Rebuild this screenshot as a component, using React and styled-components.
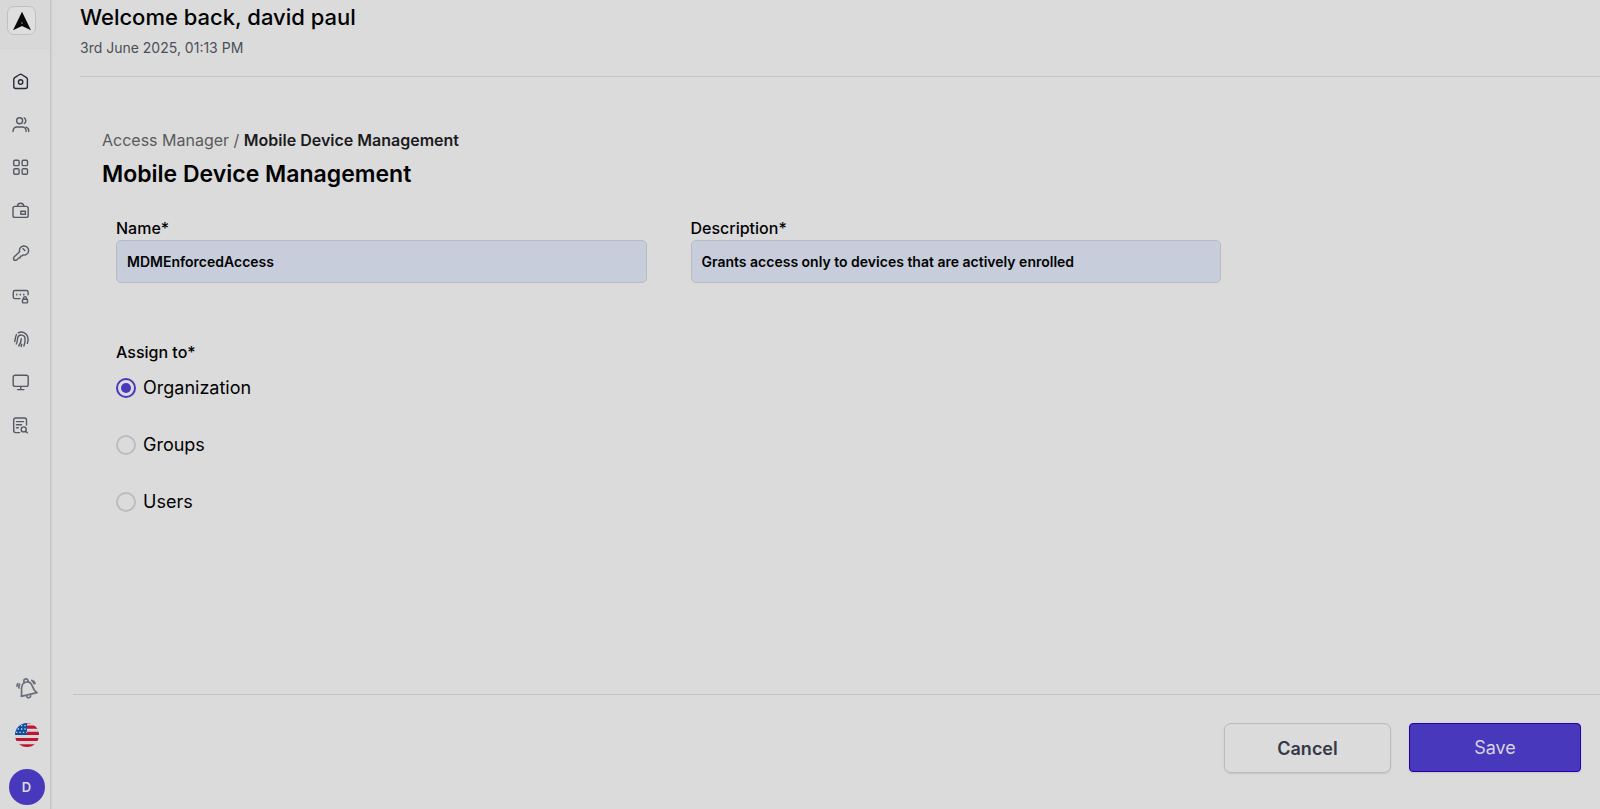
import React, { useState } from 'react';
import styled, { createGlobalStyle } from 'styled-components';

const GlobalStyle = createGlobalStyle`
  * {
    box-sizing: border-box;
  }

  body {
    margin: 0;
    background: #dbdbdb;
    color: #020203;
    font-family: Inter, 'Liberation Sans', sans-serif;
  }

  button,
  input {
    font-family: inherit;
  }
`;

const Page = styled.div`
  display: flex;
  min-height: 100vh;
`;

const Sidebar = styled.aside`
  flex: 0 0 51px;
  display: flex;
  flex-direction: column;
  border-right: 1px solid #c3c3c5;
  box-shadow: 1px 0 2px rgba(0, 0, 0, 0.06);
`;

const LogoArea = styled.div`
  height: 49px;
  padding: 6px 7px;
  background: #d8d8d8;
  border-bottom: 1px solid #d5d5d5;
`;

const LogoLink = styled.a`
  display: flex;
  align-items: center;
  justify-content: center;
  width: 29px;
  height: 29px;
  border: 1px solid #c0c0c0;
  border-radius: 7px;
  background: #dedede;
`;

const SideNav = styled.nav`
  display: flex;
  flex-direction: column;
  gap: 23px;
  padding: 22px 11px;
`;

const SideLink = styled.a`
  display: block;
  height: 20px;
  color: ${(props) => (props.$active ? '#262a3a' : '#555964')};

  svg {
    display: block;
  }
`;

const SideFooter = styled.div`
  margin-top: auto;
  display: flex;
  flex-direction: column;
  align-items: center;
  gap: 22px;
  padding: 0 4px 4px 7px;
`;

const SideButton = styled.button`
  display: flex;
  align-items: center;
  justify-content: center;
  width: 24px;
  height: 24px;
  padding: 0;
  border: none;
  border-radius: 50%;
  background: none;
  color: #6b6f7a;
  cursor: pointer;
`;

const Avatar = styled.button`
  width: 36px;
  height: 36px;
  padding: 0;
  border: none;
  border-radius: 50%;
  background: #4838bb;
  color: #dbdbdb;
  font-size: 13px;
  font-weight: 600;
  cursor: pointer;
`;

const Main = styled.main`
  flex: 1;
  min-width: 0;
  display: flex;
  flex-direction: column;
`;

const Header = styled.header`
  margin-left: 29px;
  padding: 3px 0 18px;
  border-bottom: 1px solid #c6c6c6;
`;

const Welcome = styled.h2`
  margin: 0;
  font-size: 22px;
  line-height: 28px;
  font-weight: 500;
`;

const DateText = styled.p`
  margin: 7px 0 0;
  font-size: 14px;
  line-height: 20px;
  color: #4c4f58;
`;

const Content = styled.form`
  flex: 1;
  display: flex;
  flex-direction: column;
`;

const Body = styled.div`
  padding: 51px 6px 24px 51px;
`;

const Breadcrumb = styled.nav`
  font-size: 16px;
  line-height: 24px;
  color: #5a5a5a;

  a {
    color: inherit;
    text-decoration: none;
  }

  span {
    color: #1b1b1e;
    font-weight: 600;
  }
`;

const Title = styled.h1`
  margin: 4px 0 0;
  font-size: 23px;
  line-height: 36px;
  font-weight: 600;
`;

const Fields = styled.div`
  display: grid;
  grid-template-columns: 1fr 1fr;
  gap: 44px;
  width: 75%;
  margin-top: 24px;
  padding-left: 14px;
`;

const Field = styled.div`
  display: flex;
  flex-direction: column;
`;

const Label = styled.label`
  font-size: 16px;
  line-height: 24px;
  font-weight: 500;
`;

const TextInput = styled.input`
  width: 100%;
  height: 43px;
  padding: 0 10px;
  border: 1px solid #b9bbc0;
  border-radius: 5px;
  background: #c7cdda;
  color: #020203;
  font-size: 14px;
  font-weight: 600;
`;

const Assign = styled.fieldset`
  margin: 57px 0 0;
  padding: 0 0 0 14px;
  border: none;

  legend {
    padding: 0;
    font-size: 16px;
    line-height: 24px;
    font-weight: 500;
  }
`;

const RadioList = styled.div`
  display: flex;
  flex-direction: column;
  align-items: flex-start;
  gap: 33px;
  padding-top: 12px;
`;

const RadioLabel = styled.label`
  display: flex;
  align-items: center;
  gap: 7px;
  font-size: 18px;
  line-height: 24px;
  cursor: pointer;
`;

const Radio = styled.input`
  appearance: none;
  display: grid;
  place-content: center;
  width: 20px;
  height: 20px;
  margin: 0;
  border: 2px solid #bcbcbc;
  border-radius: 50%;

  &:checked {
    border-color: #4838bb;
  }

  &:checked::before {
    content: '';
    width: 10px;
    height: 10px;
    border-radius: 50%;
    background: #4838bb;
  }
`;

const Actions = styled.footer`
  display: flex;
  justify-content: flex-end;
  gap: 18px;
  margin: auto 0 0 22px;
  padding: 28px 19px 36px 0;
  border-top: 1px solid #c2c2c4;
`;

const Button = styled.button`
  width: ${(props) => (props.$primary ? '172px' : '167px')};
  height: ${(props) => (props.$primary ? '49px' : '50px')};
  border: 1px solid ${(props) => (props.$primary ? '#2600b0' : '#b9bac2')};
  border-radius: ${(props) => (props.$primary ? '4px' : '7px')};
  background: ${(props) => (props.$primary ? '#4838bb' : '#dbdbdb')};
  box-shadow: 0 1px 2px rgba(16, 24, 40, 0.1);
  color: ${(props) => (props.$primary ? '#d6d4e0' : '#343848')};
  font-size: 18px;
  font-weight: ${(props) => (props.$primary ? 400 : 600)};
  cursor: pointer;
`;

const iconPaths = {
  Home: (
    <>
      <path d="M2.8 8.2c0-.7.3-1.2.9-1.6l4.9-3.1a1.9 1.9 0 0 1 2 0l4.9 3.1c.6.4.9.9.9 1.6v7.3a2 2 0 0 1-2 2H4.8a2 2 0 0 1-2-2z" />
      <circle cx="9.6" cy="11" r="2.2" />
    </>
  ),
  Users: (
    <>
      <circle cx="8.6" cy="6.7" r="3" />
      <path d="M2.1 17.6v-.8a3.8 3.8 0 0 1 3.8-3.8h5.4a3.8 3.8 0 0 1 3.8 3.8v.8" />
      <path d="M13.2 3.9a3.2 3.2 0 0 1 0 5.6M15 13.1a3.8 3.8 0 0 1 2.7 3.6v.9" />
    </>
  ),
  Applications: (
    <>
      <rect x="2.7" y="3.2" width="5.4" height="5.4" rx="1.2" />
      <rect x="11.1" y="3.2" width="5.4" height="5.4" rx="1.2" />
      <rect x="2.7" y="11.8" width="5.4" height="5.4" rx="1.2" />
      <rect x="11.1" y="11.8" width="5.4" height="5.4" rx="1.2" />
    </>
  ),
  Workspace: (
    <>
      <rect x="2" y="6.4" width="15.2" height="11" rx="2" />
      <path d="M6.4 6.4a3.2 3.2 0 0 1 6.4 0" />
      <rect x="9.8" y="11.2" width="4.6" height="3" />
    </>
  ),
  Keys: (
    <>
      <path d="M8.6 8.8a4.6 4.6 0 1 1 3.3 3.2l-.9.9-1.6.3-.3 1.6-1.6.3-1.5 1.7c-.3.3-.6.4-1 .4H3.5a.9.9 0 0 1-.9-.9v-1.2c0-.4.2-.7.4-1z" />
      <path d="m12 5.7 1.9 1.9" />
    </>
  ),
  Passwords: (
    <>
      <path d="M9 12.6H4A1.700 1.700 0 0 1 2.300 10.900V6.200c0-.9.8-1.700 1.700-1.700h11.400c.9 0 1.700.8 1.700 1.700v2.600" />
      <path d="M5.800 8.300v.6M9.300 8.300v.6M12.800 8.300v.6" />
      <rect x="11.500" y="13.300" width="5" height="3.600" rx="0.600" />
      <path d="M12.600 13.200V12a1.400 1.400 0 0 1 2.800 0v1.200" />
    </>
  ),
  Authentication: (
    <>
      <path d="M7.2 3.8a6.7 6.7 0 0 1 9.6 4.4c.5 2 .3 4.2-.4 6.2" />
      <path d="M3.7 12.6c.7-2.1.4-4.6 1.8-7.1" />
      <path d="M5.3 15c1.5-2.7 1-5 1.4-6.3a3.8 3.8 0 0 1 7.4.9c.2 2.6-.2 5-1.2 7.4" />
      <path d="M7.8 17c1.8-2.8 2.4-4.9 2.5-7.4M10.8 15.3l-.7 2.2" />
    </>
  ),
  Devices: (
    <>
      <rect x="2.2" y="3.2" width="15" height="11.2" rx="2" />
      <path d="M9.7 14.4v3M6.5 17.6h6.4" />
    </>
  ),
  Reports: (
    <>
      <path d="M8.6 17.6H4.7a2 2 0 0 1-2-2V5a2 2 0 0 1 2-2h8.8a2 2 0 0 1 2 2v5" />
      <path d="M5.5 6.6h7M5.5 9.7h5M5.5 12.8h1.8" />
      <circle cx="12.7" cy="14.4" r="2.5" />
      <path d="m14.6 16.2 1.7 1.5" />
    </>
  ),
};

function Icon({ name }) {
  return (
    <svg
      width="20"
      height="20"
      viewBox="0 0 20 20"
      fill="none"
      stroke="currentColor"
      strokeWidth="1.4"
      strokeLinecap="round"
      strokeLinejoin="round"
    >
      {iconPaths[name]}
    </svg>
  );
}

function BellIcon() {
  return (
    <svg width="24" height="24" viewBox="0 1 24 24" fill="none" stroke="currentColor" strokeWidth="1.7" strokeLinecap="round" strokeLinejoin="round">
      <path d="M6.3 20.4c.8-2.5-.2-5.6.4-9.2.5-3 2.2-5 4.8-5.2 2.6-.3 4.6 1.2 5.6 3.7 1.2 3 2.100 5.300 4.900 7z" />
      <path d="M9.2 6.6c-.9-2.4 0-3.7 1.5-3.8 1.5-.2 2.4.9 2.5 3M11.8 20.6c.7 1.9 3.6 1.5 3.9-.8" />
      <path d="M4.700 8.200C4 9.300 3.700 10.600 3.900 12M2.900 7.600c-.6.8-.9 1.600-.9 2.600M16.800 4.400c1 .8 1.800 1.800 2.100 3.200M18.600 5.200c.7.600 1.100 1.400 1.300 2.300" />
    </svg>
  );
}

function FlagIcon() {
  return (
    <svg width="24" height="24" viewBox="0 0 24 24">
      <defs>
        <clipPath id="flag-circle">
          <circle cx="12" cy="12" r="12" />
        </clipPath>
      </defs>
      <g clipPath="url(#flag-circle)">
        <rect width="24" height="24" fill="#d6d6d6" />
        <path fill="#c21430" d="M12 2.6h12v3.1H12zM12 8.8h12v3.1H12zM0 15h24v3.1H0zM0 21.2h24V24H0zM12 0h12v.4H12z" />
        <path fill="#0d4f9e" d="M0 0h12v12H0z" />
        <path stroke="#c8d2df" strokeWidth="1.3" strokeDasharray="1.4 2" d="M6 2.6h6M2.6 6h9.4M1 9.4h11" />
      </g>
    </svg>
  );
}

const options = ['Organization', 'Groups', 'Users'];

function App() {
  const [name, setName] = useState('MDMEnforcedAccess');
  const [description, setDescription] = useState('Grants access only to devices that are actively enrolled');
  const [assignTo, setAssignTo] = useState('Organization');

  return (
    <Page>
      <GlobalStyle />
      <Sidebar>
        <LogoArea>
          <LogoLink href="#" aria-label="Dashboard">
            <svg width="20" height="20" viewBox="0 0 20 20">
              <path fill="#08080a" d="M10 .7 19 19.3 10 15 1 19.3z" />
              <circle cx="10" cy="12" r="1" fill="#555" />
            </svg>
          </LogoLink>
        </LogoArea>
        <SideNav aria-label="Main">
          {Object.keys(iconPaths).map((item) => (
            <SideLink key={item} href="#" aria-label={item} $active={item === 'Home'}>
              <Icon name={item} />
            </SideLink>
          ))}
        </SideNav>
        <SideFooter>
          <SideButton type="button" aria-label="Notifications">
            <BellIcon />
          </SideButton>
          <SideButton type="button" aria-label="Language">
            <FlagIcon />
          </SideButton>
          <Avatar type="button">D</Avatar>
        </SideFooter>
      </Sidebar>

      <Main>
        <Header>
          <Welcome>Welcome back, david paul</Welcome>
          <DateText>3rd June 2025, 01:13 PM</DateText>
        </Header>
        <Content onSubmit={(e) => e.preventDefault()}>
          <Body>
            <Breadcrumb aria-label="Breadcrumb">
              <a href="#">Access Manager</a> / <span>Mobile Device Management</span>
            </Breadcrumb>
            <Title>Mobile Device Management</Title>

            <Fields>
              <Field>
                <Label htmlFor="name">Name*</Label>
                <TextInput id="name" type="text" value={name} onChange={(e) => setName(e.target.value)} />
              </Field>
              <Field>
                <Label htmlFor="description">Description*</Label>
                <TextInput
                  id="description"
                  type="text"
                  value={description}
                  onChange={(e) => setDescription(e.target.value)}
                />
              </Field>
            </Fields>

            <Assign>
              <legend>Assign to*</legend>
              <RadioList>
                {options.map((option) => (
                  <RadioLabel key={option}>
                    <Radio
                      type="radio"
                      name="assignTo"
                      value={option}
                      checked={assignTo === option}
                      onChange={() => setAssignTo(option)}
                    />
                    {option}
                  </RadioLabel>
                ))}
              </RadioList>
            </Assign>
          </Body>

          <Actions>
            <Button type="button">Cancel</Button>
            <Button type="submit" $primary>Save</Button>
          </Actions>
        </Content>
      </Main>
    </Page>
  );
}

export default App;
